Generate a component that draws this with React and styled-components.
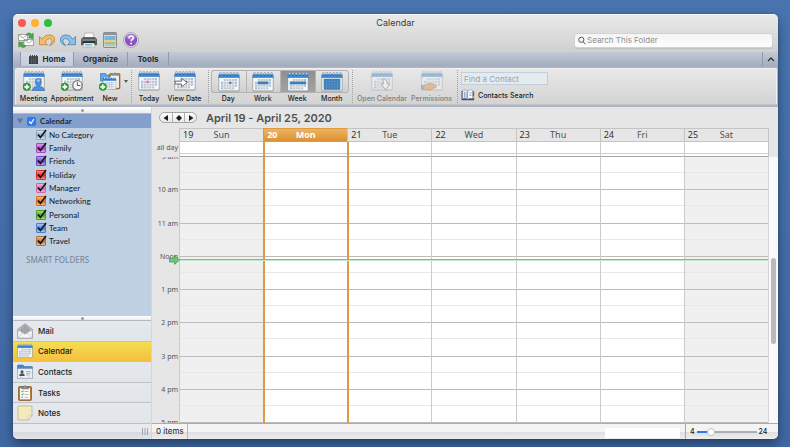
import React, { useState } from "react";
import styled, { createGlobalStyle, css } from "styled-components";

const ui = `Inter, "Liberation Sans", sans-serif`;
const humanist = `"Noto Sans", "Open Sans", sans-serif`;

const GlobalStyle = createGlobalStyle`
  *, *::before, *::after { box-sizing: border-box; }
  body { margin: 0; background: #4671ad; font-family: ${ui}; color: #1c1c1c; }
  button { border: 0; padding: 0; margin: 0; background: none; color: inherit; font: inherit; }
  input { margin: 0; font: inherit; }
  svg { display: block; flex: none; }
`;

const Desktop = styled.div`
  height: 100vh;
  min-height: 420px;
  padding: 14px 12px 8px 13px;
  display: flex;
  background: linear-gradient(#4974b0, #4069a3);
`;
const Window = styled.div`
  flex: 1;
  min-width: 0;
  display: flex;
  flex-direction: column;
  overflow: hidden;
  border-radius: 5px;
  background: #e6e6e6;
  box-shadow: 0 0 1px rgba(0, 0, 0, 0.6), 0 5px 12px rgba(0, 0, 0, 0.4);
`;

/* ---------- title bar ---------- */
const TitleBar = styled.header`
  height: 38px;
  flex: none;
  border-top: 1px solid #f6f6f6;
  background: linear-gradient(#e9e9e9, #d0d0d0);
`;
const TitleRow = styled.div`
  height: 15px;
  display: grid;
  grid-template-columns: 1fr auto 1fr;
  align-items: center;
  padding: 0 5px;
`;
const Lights = styled.div`
  display: flex;
  gap: 5px;
`;
const Light = styled.button`
  width: 8px;
  height: 8px;
  border-radius: 50%;
  background: ${(p) => p.$color};
`;
const Title = styled.h1`
  margin: 0;
  font-size: 9px;
  line-height: 12px;
  font-weight: 400;
  color: #3a3a3a;
`;
const QuickRow = styled.div`
  display: flex;
  align-items: center;
  height: 20px;
  padding: 0 5px;
`;
const QuickTools = styled.div`
  display: flex;
  gap: 5px;
  flex: 1;
`;
const IconButton = styled.button`
  width: 16px;
  height: 16px;
`;
const SearchBox = styled.label`
  display: flex;
  align-items: center;
  gap: 1px;
  width: 199px;
  height: 15px;
  padding: 0 3px;
  border-radius: 3px;
  border: 1px solid #d2d2d2;
  background: linear-gradient(#f4f4f4, #fdfdfd);
  box-shadow: 0 1px 0 #c2c2c2;
`;
const SearchInput = styled.input`
  flex: 1;
  min-width: 0;
  border: 0;
  padding: 0;
  outline: 0;
  background: none;
  font-size: 8px;
  line-height: 12px;
  &::placeholder { color: #8f8f8f; }
`;

/* ---------- tabs ---------- */
const TabStrip = styled.nav`
  display: flex;
  flex: none;
  height: 15px;
  padding-left: 7px;
  background: linear-gradient(#c3cad6, #a4adbe);
  border-bottom: 1px solid #a5afbf;
`;
const Tab = styled.button`
  display: flex;
  align-items: center;
  justify-content: center;
  gap: 5px;
  width: ${(p) => p.$width}px;
  font-size: 8px;
  line-height: 12px;
  font-weight: 700;
  color: #2b2b2e;
  border-right: 1px solid #8f9aae;
  ${(p) =>
    p.$active &&
    css`
      background: linear-gradient(#d3d9e3, #c4ccd9);
      border-left: 1px solid #8f9aae;
    `}
`;
const CollapseButton = styled.button`
  display: flex;
  align-items: center;
  justify-content: center;
  width: 16px;
  margin-left: auto;
  border-left: 1px solid #8f9aae;
`;

/* ---------- ribbon ---------- */
const RibbonFrame = styled.div`
  flex: none;
  padding: 1px 1px 2px 2px;
  background: #abb6c7;
`;
const Ribbon = styled.div`
  display: flex;
  height: 37px;
  padding: 1px 3px;
  border-radius: 2px;
  border: 1px solid #f0f0f0;
  border-bottom-color: #c6c6c6;
  background: linear-gradient(#e8e8e8, #d3d3d3);
`;
const Tool = styled.button`
  display: flex;
  flex-direction: column;
  align-items: center;
  gap: 3px;
  padding-top: 1px;
  width: ${(p) => p.$width}px;
  font-size: 7px;
  line-height: 9px;
  font-weight: 500;
  white-space: nowrap;
  &:disabled { color: #808080; }
  &:disabled svg { opacity: 0.45; }
`;
const Separator = styled.div`
  width: 1px;
  margin: 0 2px 0 3px;
  border-left: 1px dotted #a0a0a0;
`;
const CaretButton = styled.button`
  width: 4px;
  height: 22px;
`;
const ViewSwitch = styled.div`
  display: grid;
  grid-template-columns: repeat(4, 1fr);
  width: 138px;
`;
const ViewButton = styled.button`
  display: flex;
  flex-direction: column;
  align-items: center;
  gap: 1px;
  font-size: 7px;
  line-height: 9px;
  font-weight: 500;
`;
const ViewFace = styled.span`
  display: flex;
  justify-content: center;
  align-items: center;
  width: 100%;
  height: 23px;
  border: 1px solid #b3b3b3;
  border-right-width: ${(p) => (p.$last ? 1 : 0)}px;
  border-radius: ${(p) => (p.$first ? "3px 0 0 3px" : p.$last ? "0 3px 3px 0" : "0")};
  background: ${(p) => (p.$on ? "linear-gradient(#8f8f8f, #a3a3a3)" : "linear-gradient(#e6e6e6, #d0d0d0)")};
`;
const ContactSearch = styled.div`
  display: flex;
  flex-direction: column;
  gap: 4px;
  width: 88px;
  padding: 2px 0 0 1px;
`;
const ContactInput = styled.input`
  width: 100%;
  height: 13px;
  padding: 0 2px;
  border: 1px solid #bfd0dc;
  border-radius: 0;
  background: #e3ebf0;
  font-size: 8px;
  line-height: 10px;
  &::placeholder { color: #9aa4ab; }
`;
const ContactButton = styled.button`
  display: flex;
  align-items: center;
  gap: 3px;
  font-size: 7px;
  line-height: 11px;
  font-weight: 500;
`;

/* ---------- sidebar ---------- */
const Body = styled.div`
  display: flex;
  flex: 1;
  min-height: 0;
`;
const Sidebar = styled.aside`
  display: flex;
  flex-direction: column;
  flex: none;
  width: 139px;
  background: #bfd0e3;
  border-right: 1px solid #d2d6da;
`;
const Splitter = styled.div`
  display: flex;
  align-items: center;
  justify-content: center;
  flex: none;
  height: ${(p) => p.$height}px;
  background: linear-gradient(#ffffff, #ececec);
  border-bottom: 1px solid #b4b9bf;
  &::after {
    content: "";
    width: 3px;
    height: 3px;
    border-radius: 50%;
    background: #9b9b9b;
  }
`;
const Folders = styled.div`
  flex: 1;
  min-height: 0;
  overflow: hidden;
  font-family: Lato, ${humanist};
  font-size: 8px;
  line-height: 12px;
  font-weight: 500;
  color: #1c2834;
`;
const FolderHead = styled.div`
  display: flex;
  align-items: center;
  gap: 4px;
  height: 14px;
  padding-left: 4px;
  background: #829fce;
`;
const HeadLabel = styled.label`
  display: flex;
  align-items: center;
  gap: 4px;
  font-weight: 700;
`;
const CategoryList = styled.ul`
  display: flex;
  flex-direction: column;
  height: 120px;
  margin: 0;
  padding: 0;
  list-style: none;
`;
const CategoryItem = styled.li`
  flex: 1;
  display: flex;
  align-items: center;
  padding-left: 23px;
`;
const CategoryLabel = styled.label`
  display: flex;
  align-items: center;
  gap: 3px;
`;
const Tick = styled.span`
  position: relative;
  display: block;
  width: ${(p) => p.$size}px;
  height: ${(p) => p.$size}px;
`;
const TickInput = styled.input`
  appearance: none;
  display: block;
  width: 100%;
  height: 100%;
  border-radius: ${(p) => (p.$round ? 2 : 1)}px;
  border: 1px solid ${(p) => p.$edge};
  background: ${(p) => p.$fill};
`;
const TickMark = styled.svg`
  position: absolute;
  left: 0;
  top: -1px;
  pointer-events: none;
  visibility: hidden;
  ${TickInput}:checked + & { visibility: visible; }
`;
const SmartHeading = styled.h2`
  margin: 6px 0 0 13px;
  font-family: ${humanist};
  font-size: 8px;
  line-height: 12px;
  font-weight: 500;
  color: #7c8c9b;
`;
const ModuleList = styled.nav`
  display: flex;
  flex-direction: column;
  flex: none;
  height: 103px;
`;
const Module = styled.button`
  flex: 1;
  display: flex;
  align-items: center;
  gap: 5px;
  padding-left: 4px;
  font-size: 8px;
  line-height: 12px;
  font-weight: 500;
  border-bottom: 1px solid #bcc2c8;
  background: ${(p) => (p.$on ? "linear-gradient(#f4de52, #f5bf40)" : "linear-gradient(#e4e9ee, #e2e4e8)")};
`;
const SideFooter = styled.div`
  display: flex;
  align-items: center;
  justify-content: flex-end;
  flex: none;
  height: 15px;
  padding-right: 3px;
  background: linear-gradient(#e8eaed 50%, #d6d9dd 50%, #e0e3e7);
`;

/* ---------- calendar ---------- */
const Main = styled.main`
  display: flex;
  flex-direction: column;
  flex: 1;
  min-width: 0;
`;
const CalendarHeader = styled.div`
  display: flex;
  align-items: center;
  gap: 9px;
  flex: none;
  height: 21px;
  padding-left: 7px;
`;
const Pager = styled.div`
  display: flex;
  height: 11px;
  border: 1px solid #a4a4a4;
  border-radius: 6px;
  overflow: hidden;
  background: linear-gradient(#fdfdfd, #e9e9e9);
`;
const PagerButton = styled.button`
  display: flex;
  align-items: center;
  justify-content: center;
  width: 12px;
  & + & { border-left: 1px solid #b0b0b0; }
`;
const RangeTitle = styled.h2`
  margin: 0;
  font-size: 11px;
  line-height: 16px;
  font-weight: 600;
  color: #505050;
`;
const Sheet = styled.div`
  display: grid;
  flex: 1;
  min-height: 0;
  grid-template-columns: 27px minmax(0, 1fr) 9px;
  grid-template-rows: 14px 15px minmax(0, 1fr);
  font-family: ${humanist};
`;
const DayHeads = styled.div`
  grid-column: 2;
  display: grid;
  grid-template-columns: repeat(7, 1fr);
  border-right: 1px solid #c4c4c4;
`;
const DayHead = styled.div`
  display: grid;
  grid-template-columns: 1fr auto 1fr;
  align-items: center;
  padding: 0 3px;
  font-size: 9px;
  line-height: 12px;
  color: #505050;
  border: 1px solid #c4c4c4;
  border-right: 0;
  ${(p) =>
    p.$today &&
    css`
      color: #fff;
      font-weight: 700;
      border-color: #e09a3e;
      background: linear-gradient(#ebb464, #de912f);
    `}
`;
const DayNumber = styled.span`
  color: ${(p) => (p.$today ? "#fff" : "#303030")};
`;
const GutterLabel = styled.div`
  font-size: 7px;
  line-height: 12px;
  text-align: right;
  padding-right: 1px;
  white-space: nowrap;
  color: #555;
`;
const AllDayRow = styled.div`
  grid-column: 2;
  display: grid;
  grid-template-columns: repeat(7, 1fr);
  border-right: 1px solid #c4c4c4;
`;
const columnEdge = css`
  border-left: ${(p) => (p.$orange ? "2px solid #e09a3e" : "1px solid #cbcbcb")};
`;
const AllDayCell = styled.div`
  ${columnEdge}
  background: #fff;
  border-bottom: 1px solid #a6a6a6;
  &::after {
    content: "";
    display: block;
    height: 12px;
    border-bottom: 1px solid #cfcfcf;
  }
`;
const Gutter = styled.div`
  display: flex;
  flex-direction: column;
  overflow: hidden;
`;
const FirstHourLabel = styled(GutterLabel)`
  flex: none;
  height: 12px;
  margin: -6px 0;
`;
const GutterHour = styled.div`
  flex: 1;
  min-height: 0;
  display: flex;
  flex-direction: column;
  justify-content: flex-end;
`;
const HourLabel = styled(GutterLabel)`
  height: 12px;
  margin-bottom: -6px;
`;
const Hours = styled.div`
  position: relative;
  display: grid;
  grid-template-columns: repeat(7, 1fr);
  border-right: 1px solid #d6d6d6;
`;
const DayColumn = styled.div`
  ${columnEdge}
  display: flex;
  flex-direction: column;
  min-height: 0;
  background: ${(p) => (p.$weekend ? "#f0f0f0" : "#fff")};
`;
const Hour = styled.div`
  flex: 1;
  border-bottom: 1px solid #bcbcbc;
  &::before {
    content: "";
    display: block;
    height: 50%;
    border-bottom: 1px solid #e8e8e8;
  }
`;
const NowLine = styled.div`
  position: absolute;
  top: 38.5%;
  left: 0;
  right: 0;
  height: 2px;
  border-top: 1px solid #6cc77a;
  background: #c4e9c9;
`;
const NowArrow = styled.svg`
  position: absolute;
  left: -10px;
  top: -5px;
`;
const ScrollTrack = styled.div`
  display: flex;
  flex-direction: column;
  align-items: center;
  background: #f9f9f9;
`;
const ScrollLead = styled.div`
  flex: 101;
`;
const ScrollThumb = styled.div`
  flex: 86;
  width: 5px;
  border-radius: 3px;
  background: #bababa;
`;
const ScrollTail = styled.div`
  flex: 79;
`;
const StatusBar = styled.footer`
  display: flex;
  flex: none;
  height: 16px;
  border-top: 1px solid #acacac;
  background: linear-gradient(#f4f4f4 50%, #dedede 50%, #eeeeee);
  font-size: 8px;
  line-height: 15px;
`;
const ItemCount = styled.div`
  width: 36px;
  padding-left: 4px;
  border-right: 1px solid #b7b7b7;
  white-space: nowrap;
`;
const StatusField = styled.div`
  width: 75px;
  margin: 4px 5px 1px auto;
  background: #fff;
`;
const Zoom = styled.label`
  display: flex;
  align-items: center;
  gap: 2px;
  width: 93px;
  padding-left: 4px;
  border-left: 1px solid #a8a8a8;
  font-size: 7px;
  font-weight: 500;
`;
const ZoomSlider = styled.input`
  appearance: none;
  width: 60px;
  height: 10px;
  background: linear-gradient(90deg, #2d78f0 24%, #adadad 24%) center / 100% 2px no-repeat;
  &::-webkit-slider-thumb {
    appearance: none;
    width: 8px;
    height: 8px;
    border-radius: 50%;
    background: #fff;
    border: 1px solid #c2c2c2;
  }
`;

/* ---------- drawings ---------- */
const accent = "#3f7fb8";

function CalendarGlyph({ mark, badge, width = 22, height = 20, children }) {
  const cells = [];
  for (let r = 0; r < 4; r++) {
    for (let c = 0; c < 6; c++) {
      if (r === 0 && c < 1) continue;
      if (r === 3 && c > 4) continue;
      let fill = c === 0 || c === 5 ? "#a3bfd9" : "#c3c9cf";
      if (mark === "day" && r === 1 && c === 3) fill = "#2d70b0";
      if (mark === "today" && r === 1 && c === 2) fill = "#df4cc4";
      cells.push(
        <rect key={`${r}-${c}`} x={3 + c * 2.75} y={7 + r * 2.75} width="2.2" height="2.2" fill={fill} />
      );
    }
  }
  return (
    <svg width={width} height={height} viewBox="0 0 22 20" aria-hidden="true">
      <rect x="0.5" y="3" width="21" height="16.4" rx="1" fill="#8f959b" />
      <rect x="1.2" y="3" width="19.6" height="15.6" rx="0.6" fill="#f5f7f8" />
      <path d="M0.5 5.4V3.1Q0.5 2 1.6 2h18.8q1.1 0 1.1 1.1v2.3z" fill="#3e8ddd" />
      <path d="M0.5 5.4h21" stroke="#2467ad" strokeWidth="0.6" />
      {[2.5, 5.9, 9.3, 12.7, 16.1, 19.5].map((x) => (
        <g key={x}>
          <ellipse cx={x} cy="1.7" rx="0.9" ry="1.4" fill="#cfdce8" stroke="#667d95" strokeWidth="0.5" />
          <circle cx={x} cy="3.3" r="0.6" fill="#164f8e" />
        </g>
      ))}
      {cells}
      {mark === "work" && <rect x="5.6" y="9.5" width="10.8" height="2.8" fill={accent} />}
      {mark === "week" && <rect x="2.8" y="9.5" width="16.4" height="2.8" fill={accent} />}
      {mark === "month" && (
        <>
          <path d="M2.700 6.700h16.600v11H2.700z" fill={accent} />
          <path d="M2.700 9.500h16.600M2.700 12.200h16.600M2.700 15h16.600M5.500 6.700v11M8.200 6.700v11M11 6.700v11M13.800 6.700v11M16.500 6.700v11" stroke="#6ba0cd" strokeWidth="0.4" />
        </>
      )}
      {children}
      {badge && (
        <g>
          <circle cx="3.8" cy="15.8" r="3.7" fill="#2ea936" stroke="#15801e" strokeWidth="0.6" />
          <path d="M3.8 13.4v4.800M1.400 15.800h4.800" stroke="#fff" strokeWidth="1.7" />
        </g>
      )}
    </svg>
  );
}

const MeetingIcon = () => (
  <CalendarGlyph badge>
    <path d="M9.500 19.600q0-3.600 4.200-4.200v-1.200q-1.300-1.200-1.300-3.600 0-3.200 2.900-3.200t2.900 3.200q0 2.400-1.300 3.600v1.200q4.500.6 4.500 4.200z" fill="#4a90dc" stroke="#2565ad" strokeWidth="0.6" />
    <ellipse cx="15.300" cy="9.600" rx="1.700" ry="1.300" fill="#94c4f2" />
  </CalendarGlyph>
);
const AppointmentIcon = () => (
  <CalendarGlyph badge>
    <circle cx="16.4" cy="14.4" r="4.7" fill="#f8f8f8" stroke="#777" strokeWidth="1.2" />
    <path d="M16.4 11.2v3.3h3" fill="none" stroke="#444" strokeWidth="0.9" />
  </CalendarGlyph>
);
const NewIcon = () => (
  <svg width="22" height="20" viewBox="0 0 22 20" aria-hidden="true">
    <path d="M1.5 2.5h5l1.5 1.6h5V10h-11.500z" fill="#66a5e5" stroke="#2c68ab" strokeWidth="0.6" />
    <rect x="10.5" y="2.5" width="10.5" height="15.5" rx="1" fill="#b9772c" stroke="#7c4b16" strokeWidth="0.5" />
    <rect x="11.7" y="4.5" width="8.2" height="12.3" fill="#f3f3f1" />
    <path d="M13 4.5V2.8h1.6a1.3 1.3 0 0 1 2.6 0h1.6v1.7z" fill="#8e9499" />
    <rect x="4" y="7.2" width="13" height="11" rx="0.8" fill="#f4f6f8" stroke="#838b93" strokeWidth="0.5" />
    <path d="M4 9.8V7h13v2.8z" fill="#2f7dd0" />
    <path d="M5.5 6v2M8.2 6v2M10.9 6v2M13.6 6v2M15.9 6v2" stroke="#d2e3f2" strokeWidth="0.8" />
    <path d="M5.5 11.8h10M5.5 13.8h10M5.5 15.8h10M8 10.8v6M10.4 10.8v6M12.8 10.8v6" stroke="#9fb6cd" strokeWidth="0.6" />
    <circle cx="3.8" cy="15.8" r="3.7" fill="#2ea936" stroke="#15801e" strokeWidth="0.6" />
    <path d="M3.800 13.400v4.800M1.400 15.800h4.800" stroke="#fff" strokeWidth="1.7" />
  </svg>
);
const ViewDateIcon = () => (
  <CalendarGlyph mark="day">
    <path d="M0.5 10.2h7.2V7.4l5.3 4.2-5.3 4.2V13H0.5l1.6-1.4z" fill="#fff" stroke="#555" strokeWidth="0.8" />
  </CalendarGlyph>
);
const OpenCalendarIcon = () => (
  <CalendarGlyph>
    <path d="M11 8.2q5-1 5.2 4.6h2.6l-4.1 6.4-4.5-6.4h2.5q0-3-1.7-4.6z" fill="#fff" stroke="#666" strokeWidth="0.9" />
  </CalendarGlyph>
);
const PermissionsIcon = () => (
  <CalendarGlyph>
    <path d="M1 14.5h3.2l3-2h4l3.6 2.2q.8 1-.5 1.4l-4 2.6H5L1 17.8z" fill="#eb8d35" stroke="#99591c" strokeWidth="0.7" />
    <path d="M0 13.8h2.6v4.8H0z" fill="#5a80b0" />
  </CalendarGlyph>
);
const SendReceiveIcon = () => (
  <svg width="16" height="16" viewBox="0 0 16 16" aria-hidden="true">
    <g fill="#fbfbfb" stroke="#777" strokeWidth="0.6">
      <path d="M0.500 2.500h9v6h-9zM6 7.500h9.500v6H6z" />
      <path d="M0.500 2.500 5 6l4.500-3.500M6 7.500l4.700 3.500 4.800-3.500" fill="none" />
    </g>
    <path d="M8 2.600Q10.500-.6 13.600 2.300l1.600-1v5.200l-4.800-.8 1.500-1.400Q10.300 2.400 8 2.600z" fill="#48ab49" stroke="#237a27" strokeWidth="0.500" />
    <path d="M8 13.800Q5.500 17 2.400 14.100l-1.600 1V9.900l4.800.8-1.500 1.400Q5.700 14 8 13.800z" fill="#48ab49" stroke="#237a27" strokeWidth="0.500" />
  </svg>
);
const UndoIcon = ({ redo }) => (
  <svg width="16" height="16" viewBox="0 0 16 16" aria-hidden="true">
    <path
      transform={redo ? "translate(16 0) scale(-1 1)" : undefined}
      d="M0.500 4.500v8.200h8L6.100 10.300Q7.800 6.300 10.600 6.500q3.200.6 2.200 3.700-.6 1.800-2.600 3.400 5-1.400 5.400-5.600.1-4.200-4.600-5-5-.5-7.700 4.200z"
      fill={redo ? "#8fc0ec" : "#f5bd68"}
      stroke={redo ? "#3a75ad" : "#b97522"}
      strokeWidth="0.7"
    />
  </svg>
);
const PrintIcon = () => (
  <svg width="16" height="16" viewBox="0 0 16 16" aria-hidden="true">
    <path d="M3.800 1h8.400l.8 5H3z" fill="#fafafa" stroke="#888" strokeWidth="0.5" />
    <path d="M2 5.500h12l1.700 2v5.300H0.300V7.500z" fill="#55585c" stroke="#2b2d30" strokeWidth="0.5" />
    <path d="M1 8h14" stroke="#aab0b6" strokeWidth="0.9" />
    <rect x="2.400" y="9.500" width="11.200" height="1.800" fill="#141618" />
    <path d="M3 11h10l1.200 4H1.800z" fill="#f5f7f8" stroke="#888" strokeWidth="0.4" />
    <path d="M4 12.600h6" stroke="#4c98d8" strokeWidth="0.8" />
    <path d="M10 12.600h2M4 13.800h7" stroke="#48a45a" strokeWidth="0.5" />
  </svg>
);
const MyDayIcon = () => (
  <svg width="16" height="16" viewBox="0 0 16 16" aria-hidden="true">
    <rect x="1.500" y="0.500" width="13" height="15" rx="0.8" fill="#d6d8da" stroke="#777" strokeWidth="0.8" />
    <rect x="2" y="1" width="12" height="2" fill="#8e949b" />
    <rect x="2.500" y="4" width="11" height="4" fill="#79b2ea" />
    <rect x="2.500" y="8" width="11" height="2.300" fill="#f2cb74" />
    <rect x="2.500" y="10.300" width="11" height="2.200" fill="#8cc58b" />
    <path d="M3 13.800h10" stroke="#aaa" strokeWidth="0.7" />
  </svg>
);
const HelpIcon = () => (
  <svg width="16" height="16" viewBox="0 0 16 16" aria-hidden="true">
    <circle cx="8" cy="8" r="7.400" fill="#f2eff5" stroke="#888" strokeWidth="0.7" />
    <circle cx="8" cy="8" r="6.200" fill="#8c51c2" />
    <ellipse cx="8" cy="5" rx="4.600" ry="2.800" fill="#ab7fd5" />
    <path d="M5.900 6.300q0-2.300 2.200-2.300t2.200 1.900q0 1-1.100 1.700T8.100 9.300" fill="none" stroke="#fff" strokeWidth="1.500" />
    <circle cx="8.100" cy="11.500" r="1" fill="#fff" />
  </svg>
);
const MagnifierIcon = () => (
  <svg width="8" height="9" viewBox="0 0 8 9" aria-hidden="true">
    <circle cx="3.300" cy="3.800" r="2.600" fill="none" stroke="#555" />
    <path d="m5.200 5.800 2.300 2.500" stroke="#555" />
  </svg>
);
const TabCalendarIcon = () => (
  <svg width="9" height="9" viewBox="0 0 9 9" aria-hidden="true">
    <path d="M0 1.200h9V9H0z" fill="#36383b" />
    <path d="M1.500 0v2M3.500 0v2M5.500 0v2M7.500 0v2" stroke="#36383b" strokeWidth="0.9" />
    <path d="M0.500 3h8M0.500 5h8M0.500 7h8M2.500 3v6M4.500 3v6M6.500 3v6" stroke="#777d86" strokeWidth="0.400" />
  </svg>
);
const BookIcon = () => (
  <svg width="14" height="12" viewBox="0 0 14 12" aria-hidden="true">
    <path d="M0.500 2h12.600v9.200H0.500z" fill="#345377" />
    <path d="M1.500 1.300q3-1 5.200.5v8.400q-2.200-1.400-5.200-.5z" fill="#e2eaf1" stroke="#5c7289" strokeWidth="0.400" />
    <path d="M6.700 1.800q2.300-1.500 5-.5v8.400q-2.700-.9-5 .5z" fill="#fff" stroke="#5c7289" strokeWidth="0.400" />
    <path d="M3.500 3v5.500M5.100 3.500V9M8.500 3.500h2M8.500 5h2M8.500 6.500h2" stroke="#7d9fc1" strokeWidth="0.800" />
    <path d="M12.500 2v2" stroke="#3b92dc" strokeWidth="1.200" />
    <path d="M12.500 4.500v2" stroke="#e54037" strokeWidth="1.200" />
    <path d="M12.500 7v2" stroke="#efaa35" strokeWidth="1.200" />
  </svg>
);
const MailIcon = () => (
  <svg width="16" height="16" viewBox="0 0 16 16" aria-hidden="true">
    <path d="M0.500 6.500 8 0.800l7.500 5.700v8.700h-15z" fill="#c8cacb" stroke="#83888c" strokeWidth="0.700" />
    <path d="M2 7 8 1.600 14 7l-6 4.500z" fill="#a2a5a7" />
    <path d="M0.800 6.900 8 11.200l7.200-4.300v8H0.800z" fill="#f5f6f6" stroke="#a5a9ab" strokeWidth="0.500" />
    <path d="M0.800 14.900 6 10M15.200 14.900 10 10" stroke="#b6b9bb" strokeWidth="0.600" />
  </svg>
);
const ContactsIcon = () => (
  <svg width="16" height="16" viewBox="0 0 16 16" aria-hidden="true">
    <path d="M0.500 4V1.800Q0.500 1 1.300 1H6l1.200 1.500h7.500q.8 0 .8.800V5h-15z" fill="#4488d2" stroke="#2966ac" strokeWidth="0.500" />
    <path d="M0.500 4.500h15v10h-2.500a1 1 0 0 0-2 0h-6a1 1 0 0 0-2 0h-2.500z" fill="#e8eef3" stroke="#7892aa" strokeWidth="0.600" />
    <circle cx="5" cy="7.700" r="1.500" fill="#45525f" />
    <path d="M2.300 12q0-2.700 2.700-2.700T7.700 12z" fill="#45525f" />
    <path d="M9 7.500h4.500M9 9.300h4.500M9 11h3.500" stroke="#94a7b8" strokeWidth="0.800" />
  </svg>
);
const TasksIcon = () => (
  <svg width="16" height="16" viewBox="0 0 16 16" aria-hidden="true">
    <rect x="1.500" y="1.500" width="13" height="14" rx="1" fill="#b87834" stroke="#744515" strokeWidth="0.600" />
    <rect x="3" y="3" width="10" height="11.300" fill="#fbfbf8" />
    <path d="M4.500 4V2.200h2a1.500 1.500 0 0 1 3 0h2V4z" fill="#8d949a" stroke="#5a6268" strokeWidth="0.400" />
    <path d="m4.500 6.300.8.900L6.500 5.500M4.500 9.300l.8.900 1.200-1.700" fill="none" stroke="#329944" strokeWidth="0.900" />
    <path d="M7.500 6.500h4M7.500 9.500h4M7.500 12.300h4" stroke="#9c9c9c" strokeWidth="0.700" />
    <rect x="4.500" y="11.500" width="1.400" height="1.400" fill="#888" />
  </svg>
);
const NotesIcon = () => (
  <svg width="16" height="16" viewBox="0 0 16 16" aria-hidden="true">
    <path d="M1 1h14v9.500L11.500 15H1z" fill="#f3e9bd" stroke="#aaa27a" strokeWidth="0.600" />
    <path d="M11.500 15 11 11.500l4-1z" fill="#fffbe2" stroke="#b9b185" strokeWidth="0.500" />
  </svg>
);
const Triangle = ({ points }) => (
  <svg width="6" height="6" viewBox="0 0 6 6" aria-hidden="true">
    <polygon points={points} fill="#1c1c1c" />
  </svg>
);

/* ---------- data ---------- */
const categories = [
  ["No Category", "#8ba6bd", "#d7e5ef"],
  ["Family", "#a846c4", "#dfa2ea"],
  ["Friends", "#7046c0", "#b8a1e8"],
  ["Holiday", "#df2d24", "#f79389"],
  ["Manager", "#cc66ad", "#f2b7dd"],
  ["Networking", "#dc6d19", "#f7b875"],
  ["Personal", "#4ba029", "#a5d983"],
  ["Team", "#477fd2", "#a8c9f3"],
  ["Travel", "#b3713f", "#e7bd94"],
];
const modules = [
  ["Mail", <MailIcon />],
  ["Calendar", <CalendarGlyph width={16} height={16} />],
  ["Contacts", <ContactsIcon />],
  ["Tasks", <TasksIcon />],
  ["Notes", <NotesIcon />],
];
const days = [
  [19, "Sun"], [20, "Mon"], [21, "Tue"], [22, "Wed"], [23, "Thu"], [24, "Fri"], [25, "Sat"],
];
const hours = ["10 am", "11 am", "Noon", "1 pm", "2 pm", "3 pm", "4 pm", "5 pm"];
const views = ["Day", "Work", "Week", "Month"];
const todayIndex = 1;
const besideToday = (i) => i === todayIndex || i === todayIndex + 1;

function CategoryTick({ dark, light }) {
  return (
    <Tick $size={10}>
      <TickInput type="checkbox" defaultChecked $edge={dark} $fill={`linear-gradient(${light}, ${dark} 55%, ${light})`} />
      <TickMark width="12" height="11" viewBox="0 0 12 11">
        <path d="M2 5.500 4.400 8.500 10 1" fill="none" stroke="#111" strokeWidth="1.500" />
      </TickMark>
    </Tick>
  );
}

export default function App() {
  const [view, setView] = useState("Week");
  const [module, setModule] = useState("Calendar");
  return (
    <>
      <GlobalStyle />
      <Desktop>
        <Window>
          <TitleBar>
            <TitleRow>
              <Lights>
                <Light $color="#fc5753" aria-label="Close" />
                <Light $color="#fdb32c" aria-label="Minimize" />
                <Light $color="#2cc03c" aria-label="Zoom" />
              </Lights>
              <Title>Calendar</Title>
            </TitleRow>
            <QuickRow>
              <QuickTools>
                <IconButton aria-label="Send and receive"><SendReceiveIcon /></IconButton>
                <IconButton aria-label="Undo"><UndoIcon /></IconButton>
                <IconButton aria-label="Redo"><UndoIcon redo /></IconButton>
                <IconButton aria-label="Print"><PrintIcon /></IconButton>
                <IconButton aria-label="My Day"><MyDayIcon /></IconButton>
                <IconButton aria-label="Help"><HelpIcon /></IconButton>
              </QuickTools>
              <SearchBox>
                <MagnifierIcon />
                <SearchInput aria-label="Search" placeholder="Search This Folder" />
              </SearchBox>
            </QuickRow>
          </TitleBar>

          <TabStrip>
            <Tab $width={54} $active><TabCalendarIcon />Home</Tab>
            <Tab $width={54}>Organize</Tab>
            <Tab $width={41}>Tools</Tab>
            <CollapseButton aria-label="Collapse ribbon">
              <svg width="8" height="5" viewBox="0 0 8 5"><path d="m1 4 3-3 3 3" fill="none" stroke="#333" strokeWidth="1.300" /></svg>
            </CollapseButton>
          </TabStrip>

          <RibbonFrame>
            <Ribbon>
              <Tool $width={29}><MeetingIcon />Meeting</Tool>
              <Tool $width={48}><AppointmentIcon />Appointment</Tool>
              <Tool $width={28}><NewIcon />New</Tool>
              <CaretButton aria-label="New item menu">
                <svg width="5" height="22" viewBox="0 0 5 22"><path d="M0 10h4L2 13z" fill="#555" /></svg>
              </CaretButton>
              <Separator />
              <Tool $width={30}><CalendarGlyph mark="today" />Today</Tool>
              <Tool $width={41}><ViewDateIcon />View Date</Tool>
              <Separator />
              <ViewSwitch>
                {views.map((v, i) => (
                  <ViewButton key={v} aria-pressed={view === v} onClick={() => setView(v)}>
                    <ViewFace $on={view === v} $first={i === 0} $last={i === 3}>
                      <CalendarGlyph mark={v.toLowerCase()} />
                    </ViewFace>
                    {v}
                  </ViewButton>
                ))}
              </ViewSwitch>
              <Separator />
              <Tool $width={54} disabled><OpenCalendarIcon />Open Calendar</Tool>
              <Tool $width={45} disabled><PermissionsIcon />Permissions</Tool>
              <Separator />
              <ContactSearch>
                <ContactInput aria-label="Find a Contact" placeholder="Find a Contact" />
                <ContactButton><BookIcon />Contacts Search</ContactButton>
              </ContactSearch>
            </Ribbon>
          </RibbonFrame>

          <Body>
            <Sidebar>
              <Splitter $height={7} />
              <Folders>
                <FolderHead>
                  <svg width="6" height="6" viewBox="0 0 6 6"><path d="M0 0.500h6L3 5.500z" fill="#667589" /></svg>
                  <HeadLabel>
                    <Tick $size={9}>
                      <TickInput type="checkbox" defaultChecked $round $edge="#2a72ee" $fill="#2f7cf6" />
                      <TickMark width="9" height="10" viewBox="0 0 9 10">
                        <path d="M2.200 5.500 4 7.500 7 3" fill="none" stroke="#fff" strokeWidth="1.200" />
                      </TickMark>
                    </Tick>
                    Calendar
                  </HeadLabel>
                </FolderHead>
                <CategoryList>
                  {categories.map(([name, dark, light]) => (
                    <CategoryItem key={name}>
                      <CategoryLabel>
                        <CategoryTick dark={dark} light={light} />
                        {name}
                      </CategoryLabel>
                    </CategoryItem>
                  ))}
                </CategoryList>
                <SmartHeading>SMART FOLDERS</SmartHeading>
              </Folders>
              <Splitter $height={5} />
              <ModuleList>
                {modules.map(([name, icon]) => (
                  <Module key={name} $on={module === name} onClick={() => setModule(name)}>
                    {icon}
                    {name}
                  </Module>
                ))}
              </ModuleList>
              <SideFooter>
                <svg width="6" height="7" viewBox="0 0 6 7"><path d="M0.500 0v7M3 0v7M5.500 0v7" stroke="#9b9ea3" strokeWidth="0.900" /></svg>
              </SideFooter>
            </Sidebar>

            <Main>
              <CalendarHeader>
                <Pager>
                  <PagerButton aria-label="Previous week"><Triangle points="5,0 5,6 0.500,3" /></PagerButton>
                  <PagerButton aria-label="Today"><Triangle points="3,0 6,3 3,6 0,3" /></PagerButton>
                  <PagerButton aria-label="Next week"><Triangle points="1,0 1,6 5.500,3" /></PagerButton>
                </Pager>
                <RangeTitle>April 19 - April 25, 2020</RangeTitle>
              </CalendarHeader>

              <Sheet>
                <DayHeads>
                  {days.map(([num, name], i) => (
                    <DayHead key={num} $today={i === todayIndex}>
                      <DayNumber $today={i === todayIndex}>{num}</DayNumber>
                      <span>{name}</span>
                    </DayHead>
                  ))}
                </DayHeads>
                <span />
                <GutterLabel>all day</GutterLabel>
                <AllDayRow>
                  {days.map(([num], i) => (
                    <AllDayCell key={num} $orange={besideToday(i)} />
                  ))}
                </AllDayRow>
                <span />
                <Gutter>
                  <FirstHourLabel>9 am</FirstHourLabel>
                  {hours.map((h) => (
                    <GutterHour key={h}><HourLabel>{h}</HourLabel></GutterHour>
                  ))}
                </Gutter>
                <Hours>
                  {days.map(([num], i) => (
                    <DayColumn key={num} $orange={besideToday(i)} $weekend={i === 0 || i === 6}>
                      {hours.map((h) => <Hour key={h} />)}
                    </DayColumn>
                  ))}
                  <NowLine>
                    <NowArrow width="11" height="10" viewBox="0 0 11 10">
                      <path d="M0.500 3h5V0.600L10.500 5l-5 4.400V7h-5z" fill="#6ac683" stroke="#379552" strokeWidth="0.700" />
                    </NowArrow>
                  </NowLine>
                </Hours>
                <ScrollTrack>
                  <ScrollLead />
                  <ScrollThumb />
                  <ScrollTail />
                </ScrollTrack>
              </Sheet>

              <StatusBar>
                <ItemCount>0 items</ItemCount>
                <StatusField />
                <Zoom>
                  4
                  <ZoomSlider type="range" min="4" max="24" defaultValue="8" aria-label="Hours shown" />
                  24
                </Zoom>
              </StatusBar>
            </Main>
          </Body>
        </Window>
      </Desktop>
    </>
  );
}
